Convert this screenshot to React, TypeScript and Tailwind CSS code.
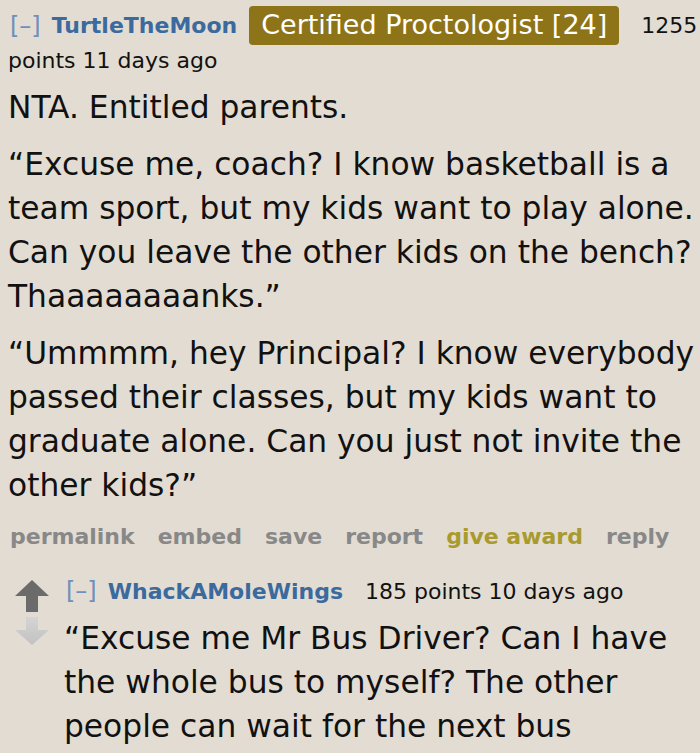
import React from "react";

export default function App() {
  return (
    <div className="w-[700px] h-[753px] overflow-hidden bg-[#e3dcd2] text-[#111] font-['DejaVu_Sans',Verdana,sans-serif]">
      <div className="pl-[8px] pt-[6px]">
        <div className="flex items-center h-[39px] whitespace-nowrap">
          <span className="ml-[2px] text-[24px] text-[#6f8fbd]">[–]</span>
          <span className="ml-[11px] text-[22px] font-bold text-[#3a6a9e]">TurtleTheMoon</span>
          <span className="ml-[12px] h-[39px] px-[12px] flex items-center rounded-[4px] bg-[#8e7418] text-white text-[27px]">
            Certified Proctologist [24]
          </span>
          <span className="ml-[22px] text-[22px] text-[#111]">1255</span>
        </div>
        <div className="text-[22px] leading-[26px] mt-[3px]">points 11 days ago</div>
        <div className="text-[31.3px] leading-[44px] mt-[11px] whitespace-nowrap">
          <p>NTA. Entitled parents.</p>
          <p className="mt-[13px]">
            “Excuse me, coach? I know basketball is a<br />
            team sport, but my kids want to play alone.<br />
            Can you leave the other kids on the bench?<br />
            Thaaaaaaaanks.”
          </p>
          <p className="mt-[13px]">
            “Ummmm, hey Principal? I know everybody<br />
            passed their classes, but my kids want to<br />
            graduate alone. Can you just not invite the<br />
            other kids?”
          </p>
        </div>
        <div className="flex gap-[23px] mt-[16px] text-[22px] leading-[28px] font-bold text-[#888] pl-[2px]">
          <span>permalink</span>
          <span>embed</span>
          <span>save</span>
          <span>report</span>
          <span className="text-[#a99a2e]">give award</span>
          <span>reply</span>
        </div>
      </div>
      <div className="flex mt-[24px] pl-[15px]">
        <div className="flex flex-col items-center w-[34px] pt-[5px]">
          <svg width="34" height="32" viewBox="0 0 34 32">
            <polygon points="17,0 34,16 23,16 23,32 11,32 11,16 0,16" fill="#6b6b6b" />
          </svg>
          <svg width="34" height="28" viewBox="0 0 34 28" className="mt-[5px]">
            <defs>
              <linearGradient id="dg" x1="0" y1="0" x2="0" y2="1">
                <stop offset="0" stopColor="#d4d4d4" />
                <stop offset="1" stopColor="#c2c2c2" />
              </linearGradient>
            </defs>
            <polygon points="11,0 23,0 23,13 34,13 17,28 0,13 11,13" fill="url(#dg)" />
          </svg>
        </div>
        <div className="ml-[15px] flex-1 whitespace-nowrap">
          <div className="flex items-center h-[32px]">
            <span className="ml-[2px] text-[24px] text-[#6f8fbd]">[–]</span>
            <span className="ml-[11px] text-[22px] font-bold text-[#3a6a9e]">WhackAMoleWings</span>
            <span className="ml-[22px] text-[22px] text-[#111]">185 points 10 days ago</span>
          </div>
          <p className="text-[31.3px] leading-[44px] mt-[9px]">
            “Excuse me Mr Bus Driver? Can I have<br />
            the whole bus to myself? The other<br />
            people can wait for the next bus
          </p>
        </div>
      </div>
    </div>
  );
}
